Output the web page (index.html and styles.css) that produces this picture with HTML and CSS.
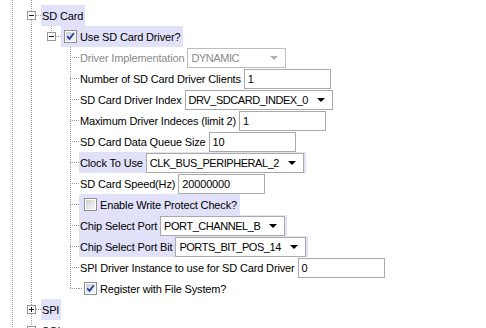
FILE: index.html
```html
<!DOCTYPE html>
<html>
<head>
<meta charset="utf-8">
<link rel="stylesheet" href="styles.css">
</head>
<body>
<div class="tree">
  <div class="row n1">
    <svg class="exp" width="9" height="9" viewBox="0 0 9 9"><rect x="0.5" y="0.5" width="8" height="8" fill="#fff" stroke="#969696"/><path d="M2 4.5h5" stroke="#1e1e1e"/></svg>
    <span class="hconn short"></span>
    <span class="cell hl pad1">SD Card</span>
  </div>
  <div class="kids k1">
    <div class="row n2">
      <svg class="exp" width="9" height="9" viewBox="0 0 9 9"><rect x="0.5" y="0.5" width="8" height="8" fill="#fff" stroke="#969696"/><path d="M2 4.5h5" stroke="#1e1e1e"/></svg>
      <span class="hconn short"></span>
      <span class="cell hl cbcell-top">
        <svg class="cb" width="13" height="13" viewBox="0 0 13 13"><defs><linearGradient id="gc" x1="0" y1="0" x2="1" y2="1"><stop offset="0" stop-color="#c9cfdc"/><stop offset="1" stop-color="#f4f5f8"/></linearGradient></defs><rect x="0.5" y="0.5" width="12" height="12" fill="#fff" stroke="#8e8f8f"/><rect x="2" y="2" width="9" height="9" fill="url(#gc)"/><path d="M3.2 6.2l2.3 2.6 4.3-5.6" fill="none" stroke="#23399a" stroke-width="1.7"/></svg>
        <span class="txt">Use SD Card Driver?</span>
      </span>
    </div>
    <div class="kids k2">
      <div class="row leaf"><span class="hconn"></span><span class="cell">
        <span class="lbl dis">Driver Implementation</span>
        <span class="combo dis w99"><span class="val">DYNAMIC</span><span class="arrow"></span></span>
      </span></div>
      <div class="row leaf"><span class="hconn"></span><span class="cell">
        <span class="lbl">Number of SD Card Driver Clients</span>
        <span class="inp">1</span>
      </span></div>
      <div class="row leaf"><span class="hconn"></span><span class="cell">
        <span class="lbl">SD Card Driver Index</span>
        <span class="combo"><span class="val">DRV_SDCARD_INDEX_0</span><span class="arrow"></span></span>
      </span></div>
      <div class="row leaf"><span class="hconn"></span><span class="cell">
        <span class="lbl">Maximum Driver Indeces (limit 2)</span>
        <span class="inp">1</span>
      </span></div>
      <div class="row leaf"><span class="hconn"></span><span class="cell">
        <span class="lbl">SD Card Data Queue Size</span>
        <span class="inp">10</span>
      </span></div>
      <div class="row leaf"><span class="hconn"></span><span class="cell hl">
        <span class="lbl">Clock To Use</span>
        <span class="combo"><span class="val">CLK_BUS_PERIPHERAL_2</span><span class="arrow"></span></span>
      </span></div>
      <div class="row leaf"><span class="hconn"></span><span class="cell">
        <span class="lbl">SD Card Speed(Hz)</span>
        <span class="inp">20000000</span>
      </span></div>
      <div class="row leaf"><span class="hconn"></span><span class="cell hl cbcell">
        <svg class="cb" width="13" height="13" viewBox="0 0 13 13"><defs><linearGradient id="gu" x1="0" y1="0" x2="1" y2="1"><stop offset="0" stop-color="#cfcfcf"/><stop offset="1" stop-color="#f6f6f6"/></linearGradient></defs><rect x="0.5" y="0.5" width="12" height="12" fill="#fff" stroke="#8e8f8f"/><rect x="2" y="2" width="9" height="9" fill="url(#gu)"/></svg>
        <span class="txt">Enable Write Protect Check?</span>
      </span></div>
      <div class="row leaf"><span class="hconn"></span><span class="cell hl">
        <span class="lbl">Chip Select Port</span>
        <span class="combo"><span class="val">PORT_CHANNEL_B</span><span class="arrow"></span></span>
      </span></div>
      <div class="row leaf"><span class="hconn"></span><span class="cell hl">
        <span class="lbl">Chip Select Port Bit</span>
        <span class="combo"><span class="val">PORTS_BIT_POS_14</span><span class="arrow"></span></span>
      </span></div>
      <div class="row leaf"><span class="hconn"></span><span class="cell">
        <span class="lbl">SPI Driver Instance to use for SD Card Driver</span>
        <span class="inp">0</span>
      </span></div>
      <div class="row leaf"><span class="hconn"></span><span class="cell cbcell plain">
        <svg class="cb" width="13" height="13" viewBox="0 0 13 13"><rect x="0.5" y="0.5" width="12" height="12" fill="#fff" stroke="#8e8f8f"/><rect x="2" y="2" width="9" height="9" fill="url(#gc)"/><path d="M3.2 6.2l2.3 2.6 4.3-5.6" fill="none" stroke="#23399a" stroke-width="1.7"/></svg>
        <span class="txt">Register with File System?</span>
      </span></div>
    </div>
  </div>
  <div class="row n1">
    <svg class="exp" width="9" height="9" viewBox="0 0 9 9"><rect x="0.5" y="0.5" width="8" height="8" fill="#fff" stroke="#969696"/><path d="M2 4.5h5M4.5 2v5" stroke="#1e1e1e"/></svg>
    <span class="hconn short"></span>
    <span class="cell hl pad1">SPI</span>
  </div>
  <div class="row n1">
    <svg class="exp" width="9" height="9" viewBox="0 0 9 9"><rect x="0.5" y="0.5" width="8" height="8" fill="#fff" stroke="#969696"/><path d="M2 4.5h5M4.5 2v5" stroke="#1e1e1e"/></svg>
    <span class="hconn short"></span>
    <span class="cell pad1">SQI</span>
  </div>
</div>
</body>
</html>
```

FILE: styles.css
```css
* { box-sizing: border-box; }
html, body { margin: 0; padding: 0; background: #fff; }
body {
  font-family: "Liberation Sans", Arial, sans-serif;
  font-size: 11px;
  letter-spacing: -0.15px;
  color: #000;
  width: 486px;
  height: 328px;
  overflow: hidden;
}
.tree {
  padding-top: 5px;
  min-height: 400px;
  background-image:
    repeating-linear-gradient(to bottom, #a0a0a0 0 1px, transparent 1px 2px),
    repeating-linear-gradient(to bottom, #a0a0a0 0 1px, transparent 1px 2px);
  background-size: 1px 100%, 1px 100%;
  background-repeat: no-repeat;
  background-position: 12px 0, 31px 0;
}
.row {
  height: 21px;
  display: flex;
  align-items: center;
}
.exp { flex: none; display: block; }
.hconn {
  flex: none;
  width: 9px;
  height: 1px;
  background: repeating-linear-gradient(to right, #a0a0a0 0 1px, transparent 1px 2px);
}
.hconn.short { width: 5px; }
.n1 { padding-left: 27px; }
.n2 { padding-left: 47px; }
.leaf { padding-left: 70px; }
.kids { background-repeat: no-repeat; }
.k1 {
  background-image: repeating-linear-gradient(to bottom, #a0a0a0 0 1px, transparent 1px 2px);
  background-size: 1px 11px;
  background-position: 51px 0;
}
.k2 {
  background-image: repeating-linear-gradient(to bottom, #a0a0a0 0 1px, transparent 1px 2px);
  background-size: 1px calc(100% - 10px);
  background-position: 70px 0;
}
.cell {
  height: 21px;
  display: flex;
  align-items: center;
  gap: 3px;
  padding-left: 1px;
  padding-right: 2px;
  white-space: nowrap;
}
.cell.pad1 { padding: 0 2px 0 1px; }
.cell.hl { background-color: #e1e1f9; }
.cbcell-top { padding-left: 3px; padding-right: 3px; }
.cbcell { padding-left: 5px; padding-right: 3px; }
.cbcell.plain {
  background-image: repeating-linear-gradient(to right, #a0a0a0 0 1px, transparent 1px 2px);
  background-size: 4px 1px;
  background-repeat: no-repeat;
  background-position: 0 10px;
}
.cb { flex: none; display: block; }
.lbl.dis { color: #8a8a8a; }
.inp, .combo {
  flex: none;
  height: 20px;
  border: 1px solid #a9a9a9;
  background: #fff;
  padding-left: 3px;
  line-height: 18px;
}
.inp { width: 87px; }
.combo {
  display: flex;
  align-items: center;
  justify-content: space-between;
  gap: 9px;
  padding-right: 7px;
}
.combo .val { letter-spacing: -0.45px; }
.combo.dis { border-color: #bdbdbd; color: #8a8a8a; }
.arrow {
  flex: none;
  width: 0;
  height: 0;
  border-left: 4px solid transparent;
  border-right: 4px solid transparent;
  border-top: 4px solid #000;
  margin-top: 1px;
}
.combo.dis .arrow { border-top-color: #b0b0b0; }
.w99 { width: 99px; }
```
